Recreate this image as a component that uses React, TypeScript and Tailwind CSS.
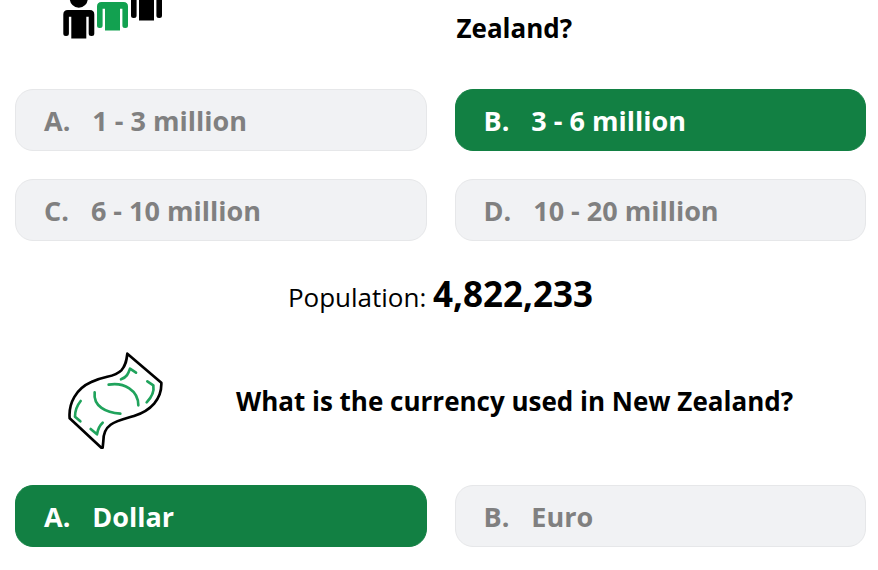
import { useState } from 'react';

type Option = { letter: string; label: string };

const POPULATION_OPTIONS: Option[] = [
  { letter: 'A', label: '1 - 3 million' },
  { letter: 'B', label: '3 - 6 million' },
  { letter: 'C', label: '6 - 10 million' },
  { letter: 'D', label: '10 - 20 million' },
];

const CURRENCY_OPTIONS: Option[] = [
  { letter: 'A', label: 'Dollar' },
  { letter: 'B', label: 'Euro' },
];

function Person({ x, y, color }: { x: number; y: number; color: string }) {
  return (
    <g transform={`translate(${x} ${y})`} fill={color}>
      <circle cx="15.5" cy="-11.3" r="9" />
      <path d="M4.5 0H26.5Q31 0 31 4.5V23.5Q31 26 28.5 26H28Q25.4 26 25.4 23.5V6.7H23V28.5H8V6.7H5.6V23.5Q5.6 26 3 26H2.5Q0 26 0 23.5V4.5Q0 0 4.5 0Z" />
    </g>
  );
}

function PeopleIcon() {
  return (
    <svg viewBox="0 0 100 40" className="h-10 w-[100px]" aria-hidden="true">
      <Person x={0.3} y={10} color="#000" />
      <Person x={34} y={2} color="#12a150" />
      <Person x={68} y={-8} color="#000" />
    </svg>
  );
}

function BanknoteIcon() {
  return (
    <svg
      viewBox="51 36 288 294"
      className="h-[98px] w-24"
      fill="none"
      strokeLinecap="round"
      strokeLinejoin="round"
      aria-hidden="true"
    >
      <path
        d="M232 41L334 128C336 178 302 212 252 228C198 244 160 250 160 303L158 323L154 323L59 235C55 190 78 146 124 126C167 105 191 114 214 91C228 76 230 59 232 41Z"
        stroke="#000"
        strokeWidth="8"
      />
      <g stroke="#20a35c" strokeWidth="8">
        <path d="M176 134C222 126 265 151 265 196" />
        <path d="M134 157C129 199 168 218 211 221" />
        <path d="M213 118C230 112 235 101 240 86L258 98" />
        <path d="M292 124L310 136C313 154 303 174 290 187" />
        <path d="M92 183C79 199 75 213 75 230L91 244" />
        <path d="M122 267L141 283C143 270 149 256 158 248" />
      </g>
    </svg>
  );
}

function Options({ name, options, answer }: { name: string; options: Option[]; answer: string }) {
  const [selected, setSelected] = useState(answer);

  return (
    <div role="group" aria-label={name} className="grid grid-cols-2 gap-7">
      {options.map(({ letter, label }) => (
        <button
          key={letter}
          type="button"
          aria-pressed={selected === letter}
          onClick={() => setSelected(letter)}
          className={[
            'flex gap-[22px] rounded-[18px] border px-7 pt-[13px] pb-[11px] text-left text-[27px] leading-9 font-bold',
            selected === letter
              ? 'border-[#128043] bg-[#128043] text-white'
              : 'border-[#e6e7e9] bg-[#f1f2f4] text-[#808080]',
          ].join(' ')}
        >
          <span>{letter}.</span>
          <span>{label}</span>
        </button>
      ))}
    </div>
  );
}

export default function App() {
  return (
    <main className="bg-white pr-3 pl-[15px] font-['Open_Sans','Noto_Sans',sans-serif] text-black">
      <section>
        <div className="grid grid-cols-2 gap-7">
          <div className="pl-12">
            <PeopleIcon />
          </div>
          <h2 className="pt-2.5 pl-0.5 text-[26px] leading-9 font-bold">Zealand?</h2>
        </div>
        <div className="pt-[43px]">
          <Options name="Population" options={POPULATION_OPTIONS} answer="B" />
        </div>
        <p className="pt-[29px] text-center text-[26px] leading-12">
          Population: <strong className="text-[35px] font-bold">4,822,233</strong>
        </p>
      </section>

      <section className="pt-[31px]">
        <div className="flex items-center pl-[52px]">
          <BanknoteIcon />
          <h2 className="flex-1 pl-[73px] text-[26px] leading-9 font-bold">
            What is the currency used in New Zealand?
          </h2>
        </div>
        <div className="py-[35px]">
          <Options name="Currency" options={CURRENCY_OPTIONS} answer="A" />
        </div>
      </section>
    </main>
  );
}
